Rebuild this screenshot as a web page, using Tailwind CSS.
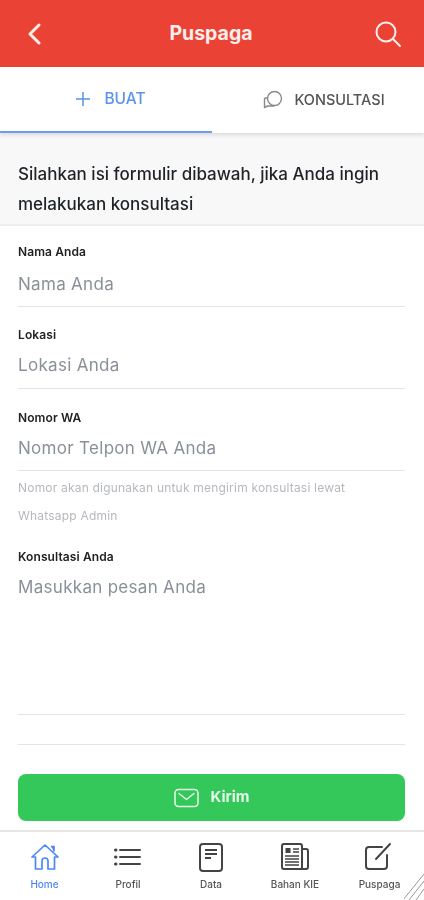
<!DOCTYPE html>
<html lang="en">
<head>
    <meta charset="UTF-8">
    <meta name="viewport" content="width=device-width, initial-scale=1.0">
    <title>Puspaga</title>
    <script src="https://cdn.jsdelivr.net/npm/@tailwindcss/browser@4"></script>
</head>
<body class="bg-white font-['Inter',sans-serif]">
<div class="relative w-[424px] h-[900px] overflow-hidden flex flex-col blur-[0.7px]">
    <!-- header -->
    <header class="h-[67px] bg-[#ea4335] flex items-center justify-between pl-[24px] pr-[22px] text-[#fdeeec]">
        <svg width="22" height="26" viewBox="0 0 22 26" fill="none" stroke="currentColor" stroke-width="3" stroke-linecap="round" stroke-linejoin="round"><path d="M15 4 6 13l9 9"/></svg>
        <span class="text-[19.5px] font-bold pl-[2px]">Puspaga</span>
        <svg width="28" height="28" viewBox="0 0 28 28" fill="none" stroke="currentColor" stroke-width="2" stroke-linecap="round"><circle cx="12" cy="12" r="9.500"/><path d="m19 19 7 7"/></svg>
    </header>

    <!-- tabs -->
    <nav class="h-[66px] flex shadow-[0_2px_4px_rgba(0,0,0,0.12)] relative">
        <div class="w-1/2 flex items-center justify-center gap-[14px] border-b-2 border-[#6d9eeb] pl-[10px] text-[#5b93ee]">
            <svg width="14" height="14" viewBox="0 0 14 14" fill="none" stroke="currentColor" stroke-width="1.500"><path d="M7 0v14M0 7h14"/></svg>
            <span class="text-[15.5px] font-medium">BUAT</span>
        </div>
        <div class="w-1/2 flex items-center justify-center gap-[11px] pl-[12px] text-[#555]">
            <svg width="20" height="20" viewBox="0 0 20 20" fill="none" stroke="#888" stroke-width="1.400" stroke-linejoin="round"><circle cx="11.500" cy="8.500" r="7"/><path d="M5 8H2.500a1 1 0 0 0-1 1v8.500l3-1.500h6a1.500 1.500 0 0 0 1-1"/></svg>
            <span class="text-[14.500px] font-medium">KONSULTASI</span>
        </div>
    </nav>

    <!-- intro -->
    <div class="h-[93px] bg-[#f8f8f8] border-b-2 border-[#eeeeee] px-[18px] pt-[26px] text-[17px] leading-[30px] font-medium text-[#1f2328]">
        <p>Silahkan isi formulir dibawah, jika Anda ingin melakukan konsultasi</p>
    </div>

    <!-- form -->
    <form class="flex-1 pl-[18px] pr-[19px] flex flex-col">
        <div class="pt-[19px] h-[81px] border-b-[1.5px] border-[#e4e4e4]">
            <label class="block text-[12px] leading-[14px] tracking-[0.1px] font-semibold text-[#222]">Nama Anda</label>
            <p class="mt-[13px] text-[17px] leading-[24px] tracking-[0.3px] text-[#8a9099]">Nama Anda</p>
        </div>
        <div class="pt-[21px] h-[82px] border-b-[1.5px] border-[#e4e4e4]">
            <label class="block text-[12px] leading-[14px] tracking-[0.1px] font-semibold text-[#222]">Lokasi</label>
            <p class="mt-[11px] text-[17px] leading-[24px] tracking-[0.3px] text-[#8a9099]">Lokasi Anda</p>
        </div>
        <div class="pt-[22px] h-[82px] border-b-[1.5px] border-[#e4e4e4]">
            <label class="block text-[12px] leading-[14px] tracking-[0.1px] font-semibold text-[#222]">Nomor WA</label>
            <p class="mt-[11px] text-[17px] leading-[24px] tracking-[0.3px] text-[#8a9099]">Nomor Telpon WA Anda</p>
        </div>
        <p class="pt-[3px] pr-[30px] text-[12px] leading-[28px] tracking-[0.2px] text-[#b5b8bd]">Nomor akan digunakan untuk mengirim konsultasi lewat Whatsapp Admin</p>
        <div class="pt-[20px] h-[185px] border-b-[1.5px] border-[#e4e4e4]">
            <label class="block text-[12px] leading-[14px] tracking-[0.1px] font-semibold text-[#222]">Konsultasi Anda</label>
            <p class="mt-[11px] text-[17px] leading-[24px] tracking-[0.3px] text-[#8a9099]">Masukkan pesan Anda</p>
        </div>
        <div class="h-[30px] border-b-[1.5px] border-[#e4e4e4]"></div>
        <button type="button" class="mt-[29px] h-[47px] rounded-[8px] bg-[#34c759] flex items-center justify-center gap-[12px] text-[#e6fbec]">
            <svg width="25" height="20" viewBox="0 0 25 20" fill="none" stroke="currentColor" stroke-width="1.500" stroke-linejoin="round"><rect x="1" y="1.500" width="23" height="17" rx="3.500"/><path d="m5 5.500 7.500 6 7.500-6" stroke-linecap="round"/></svg>
            <span class="text-[15px] font-bold">Kirim</span>
        </button>
    </form>

    <!-- bottom nav -->
    <footer class="h-[70px] border-t-2 border-[#e6e6e6] flex text-[10px] font-medium text-[#555]">
        <a class="w-[89px] flex flex-col items-center pt-[10px] text-[#4f86f7]">
            <svg width="30" height="30" viewBox="0 0 30 30" fill="none" stroke="currentColor" stroke-width="1.700" stroke-linejoin="round"><path d="M2 15 15 3l13 12h-3.500v12h-6.500v-8a3 3 0 0 0-6 0v8H5.500V15z"/><path d="M21 4.500h3v5" fill="currentColor"/></svg>
            <span class="mt-[5px] leading-[15px]">Home</span>
        </a>
        <a class="w-[78px] flex flex-col items-center pt-[10px]">
            <svg width="30" height="30" viewBox="0 0 30 30" fill="none" stroke="#444" stroke-width="2" stroke-linecap="round"><path d="M7 8h20M7 15h20M7 22h20"/><path d="M2.500 8h.5M2.500 15h.5M2.500 22h.5" stroke-width="3"/></svg>
            <span class="mt-[5px] leading-[15px]">Profil</span>
        </a>
        <a class="w-[88px] flex flex-col items-center pt-[10px]">
            <svg width="30" height="30" viewBox="0 0 30 30" fill="none" stroke="#444" stroke-width="2"><rect x="4" y="2" width="22" height="27" rx="3"/><path d="M9 8h12M9 12h12M9 16h6"/></svg>
            <span class="mt-[5px] leading-[15px]">Data</span>
        </a>
        <a class="w-[80px] flex flex-col items-center pt-[10px]">
            <svg width="30" height="30" viewBox="0 0 30 30" fill="none" stroke="#444" stroke-width="2" stroke-linejoin="round"><path d="M22 27H4a2 2 0 0 1-2-2V4a2 2 0 0 1 2-2h16a2 2 0 0 1 2 2z"/><path d="M22 7h4a2 2 0 0 1 2 2v16a2 2 0 0 1-2 2h-4"/><rect x="5.500" y="6" width="5" height="5" fill="#444" stroke="none"/><path d="M13 7h6M13 10h6M5 14h14M5 17h14M5 20h14M5 23h14" stroke-width="1.500"/></svg>
            <span class="mt-[5px] leading-[15px]">Bahan KIE</span>
        </a>
        <a class="flex-1 flex flex-col items-center pt-[10px]">
            <svg class="-ml-[3px]" width="30" height="30" viewBox="0 0 30 30" fill="none" stroke="#444" stroke-width="2" stroke-linecap="round" stroke-linejoin="round"><path d="M19 5H6a3 3 0 0 0-3 3v16a3 3 0 0 0 3 3h15a3 3 0 0 0 3-3V13"/><path d="m13 17 14-15"/></svg>
            <span class="mt-[5px] leading-[15px]">Puspaga</span>
        </a>
    </footer>

    <!-- window resize handle -->
    <svg class="absolute right-0 bottom-0" width="20" height="26" viewBox="0 0 20 26" fill="none" stroke="#999" stroke-width="1"><path d="M20 0 -1 26M20 7 5 26M20 15 12 26"/></svg>
</div>
</body>
</html>
